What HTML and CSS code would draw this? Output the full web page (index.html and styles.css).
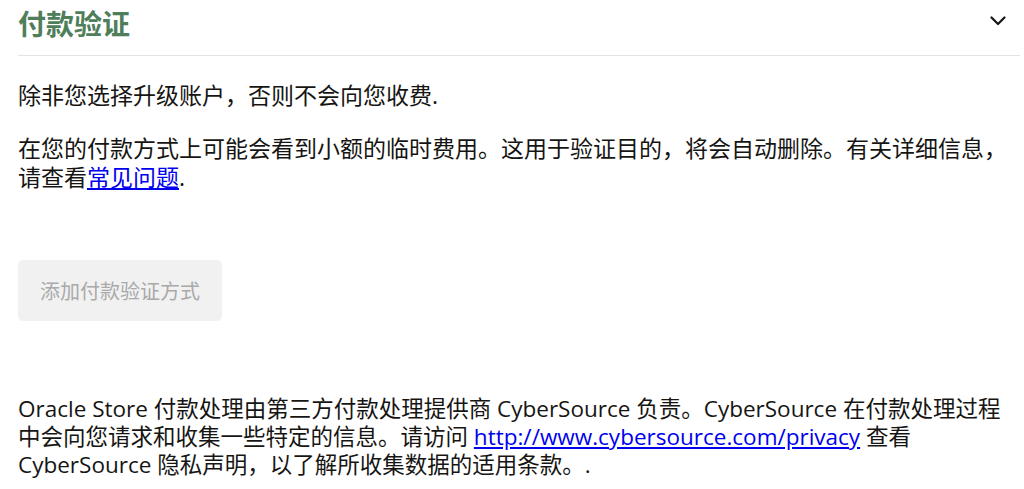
FILE: index.html
```html
<!DOCTYPE html>
<html lang="zh-CN">
<head>
<meta charset="utf-8">
<title>付款验证</title>
<link rel="stylesheet" href="styles.css">
</head>
<body>
<section class="panel">
  <header class="panel-header">
    <h2 class="panel-title">付款验证</h2>
    <svg class="chevron" width="16" height="10" viewBox="0 0 16 10" aria-hidden="true">
      <path d="M1.5 1.5 L8 8 L14.5 1.5" fill="none" stroke="#161513" stroke-width="2.2" stroke-linecap="round" stroke-linejoin="round"/>
    </svg>
  </header>
  <div class="panel-body">
    <p class="text first">除非您选择升级账户，否则不会向您收费.</p>
    <p class="text second">在您的付款方式上可能会看到小额的临时费用。这用于验证目的，将会自动删除。有关详细信息，请查看<a href="#">常见问题</a>.</p>
    <button class="btn" type="button" disabled>添加付款验证方式</button>
    <p class="text note">Oracle Store 付款处理由第三方付款处理提供商 CyberSource 负责。CyberSource 在付款处理过程中会向您请求和收集一些特定的信息。请访问 <a href="#">http://www.cybersource.com/privacy</a> 查看 CyberSource 隐私声明，以了解所收集数据的适用条款。.</p>
  </div>
</section>
</body>
</html>
```
FILE: styles.css
```css
html, body {
  margin: 0;
  padding: 0;
  background: #ffffff;
}
body {
  font-family: "Open Sans", "Noto Sans CJK SC", sans-serif;
  color: #161513;
}
.panel {
  padding: 0 4px 0 18px;
}
.panel-header {
  display: flex;
  align-items: center;
  justify-content: space-between;
  height: 46px;
  padding-bottom: 9px;
  border-bottom: 1px solid #e4e4e4;
}
.panel-title {
  margin: 0;
  font-family: "Noto Sans CJK SC", sans-serif;
  font-size: 28px;
  font-weight: 700;
  line-height: 36px;
  color: #4f7e5b;
}
.chevron {
  margin-right: 14px;
  margin-top: -4px;
}
.panel-body {
  display: flex;
  flex-direction: column;
  align-items: flex-start;
}
.text {
  margin: 0;
  font-size: 23px;
  line-height: 29px;
}
.first {
  margin-top: 25px;
}
.second {
  margin-top: 24px;
}
.text a {
  color: #0000ee;
}
.btn {
  margin-top: 68px;
  height: 61px;
  padding: 0 22px;
  border: none;
  border-radius: 5px;
  background: #f1f1f1;
  color: #a9a9a9;
  font-family: "Noto Sans CJK SC", sans-serif;
  font-size: 20px;
}
.note {
  margin-top: 74px;
  line-height: 28px;
  font-size: 22.5px;
}
```
